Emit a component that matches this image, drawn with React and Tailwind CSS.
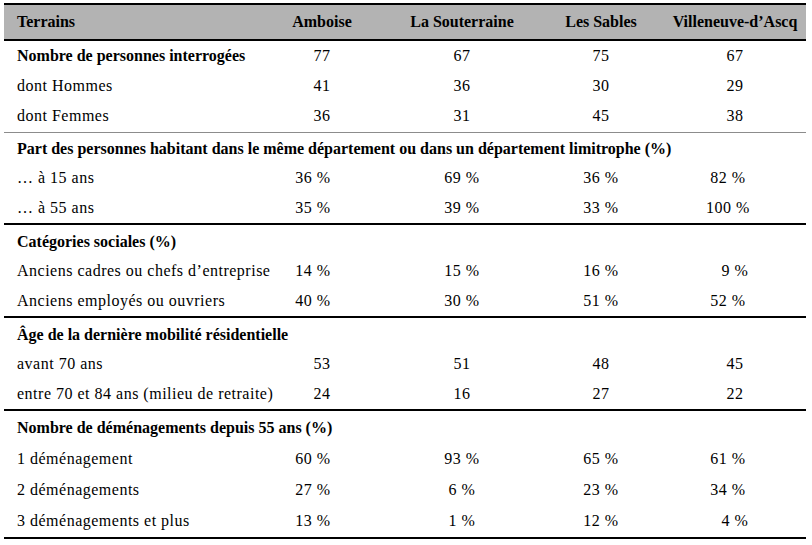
import React from 'react'

const sections = [
  {
    title: null,
    heights: ['h-[31px]', 'h-[30px]', 'h-[31px]'],
    rows: [
      { label: 'Nombre de personnes interrogées', bold: true, values: ['77', '67', '75', '67'] },
      { label: 'dont Hommes', values: ['41', '36', '30', '29'] },
      { label: 'dont Femmes', values: ['36', '31', '45', '38'] },
    ],
  },
  {
    title: 'Part des personnes habitant dans le même département ou dans un département limitrophe (%)',
    heights: ['h-[31px]', 'h-[30px]', 'h-[31px]'],
    rows: [
      { label: '… à 15 ans', values: ['36 %', '69 %', '36 %', '82 %'] },
      { label: '… à 55 ans', values: ['35 %', '39 %', '33 %', '100 %'] },
    ],
  },
  {
    title: 'Catégories sociales (%)',
    heights: ['h-[32px]', 'h-[30px]', 'h-[31px]'],
    rows: [
      { label: 'Anciens cadres ou chefs d’entreprise', values: ['14 %', '15 %', '16 %', '9 %'] },
      { label: 'Anciens employés ou ouvriers', values: ['40 %', '30 %', '51 %', '52 %'] },
    ],
  },
  {
    title: 'Âge de la dernière mobilité résidentielle',
    heights: ['h-[32px]', 'h-[30px]', 'h-[31px]'],
    rows: [
      { label: 'avant 70 ans', values: ['53', '51', '48', '45'] },
      { label: 'entre 70 et 84 ans (milieu de retraite)', values: ['24', '16', '27', '22'] },
    ],
  },
  {
    title: 'Nombre de déménagements depuis 55 ans (%)',
    heights: ['h-[33px]', 'h-[31px]', 'h-[31px]', 'h-[33px]'],
    rows: [
      { label: '1 déménagement', values: ['60 %', '93 %', '65 %', '61 %'] },
      { label: '2 déménagements', values: ['27 %', '6 %', '23 %', '34 %'] },
      { label: '3 déménagements et plus', values: ['13 %', '1 %', '12 %', '4 %'] },
    ],
  },
]

const cols = ['Amboise', 'La Souterraine', 'Les Sables', 'Villeneuve-d’Ascq']

// wide percentages in the outer columns sit a little left of the integers
function cellShift(v, j) {
  if (!v.includes('%') || v.length < 4) return ''
  if (j === 0) return 'pr-[18px]'
  if (j === 3) return 'pr-[14px]'
  return ''
}

export default function App() {
  return (
    <div className="w-[812px] h-[545px] bg-white pt-[3px] px-[4px] font-['Liberation_Serif',serif] text-[16px] text-black">
      <table className="w-[802px] table-fixed border-collapse">
        <colgroup>
          <col className="w-[254px]" />
          <col className="w-[128px]" />
          <col className="w-[152px]" />
          <col className="w-[126px]" />
          <col className="w-[142px]" />
        </colgroup>
        <thead>
          <tr className="bg-[#b3b3b3] border-t-2 border-b-2 border-black">
            <th className="h-[36px] text-left font-bold pl-[13px] whitespace-nowrap">Terrains</th>
            {cols.map((c) => (
              <th key={c} className="text-center font-bold whitespace-nowrap">{c}</th>
            ))}
          </tr>
        </thead>
        {sections.map((s, i) => {
          const hs = s.title ? s.heights.slice(1) : s.heights
          return (
            <tbody
              key={i}
              className={i === 0 ? 'border-b border-[#8c8c8c]' : 'border-b-2 border-black'}
            >
              {s.title && (
                <tr>
                  <td colSpan={5} className={`${s.heights[0]} pl-[13px] pt-[2px] font-bold whitespace-nowrap`}>{s.title}</td>
                </tr>
              )}
              {s.rows.map((r, k) => (
                <tr key={r.label}>
                  <td className={`${hs[k]} pl-[13px] whitespace-nowrap ${r.bold ? 'font-bold' : 'tracking-[0.5px]'}`}>{r.label}</td>
                  {r.values.map((v, j) => (
                    <td key={j} className={`text-center whitespace-nowrap tracking-[0.5px] ${cellShift(v, j)}`}>{v}</td>
                  ))}
                </tr>
              ))}
            </tbody>
          )
        })}
      </table>
    </div>
  )
}
